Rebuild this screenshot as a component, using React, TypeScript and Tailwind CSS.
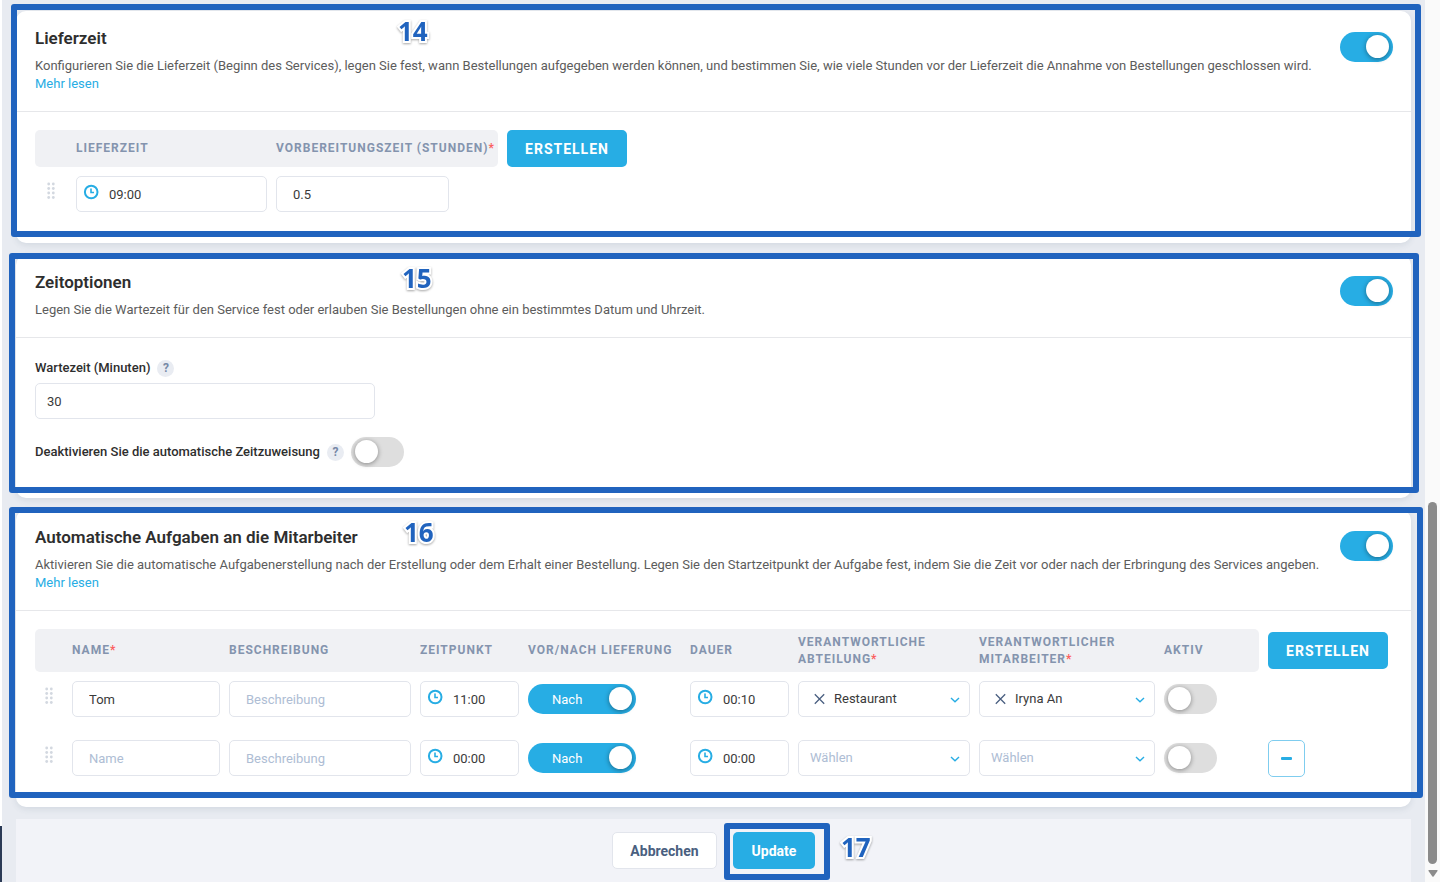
import React from "react";
import clsx from "clsx";

const INPUT =
  "block h-9 rounded-[5px] border border-[#e2e5ec] bg-white text-[13px] text-[#3a3a3a] placeholder:text-[#aebdd4] focus:outline-none";
const TH = "text-left text-xs leading-[17px] font-bold tracking-[1px] text-[#8494ae] uppercase";

const Toggle = (props: { label: string; on?: boolean }) => (
  <input
    type="checkbox"
    role="switch"
    aria-label={props.label}
    defaultChecked={props.on}
    className="relative block h-[30px] w-[53px] flex-shrink-0 appearance-none rounded-full bg-[#dedede] before:absolute before:top-[3px] before:left-1 before:size-[23px] before:rounded-full before:bg-white before:shadow-[0_1px_5px_rgba(0,0,0,0.4)] checked:bg-[#27ade4] checked:before:left-[26px]"
  />
);

const OrderToggle = (props: { label: string }) => (
  <label className="relative block h-[30px] w-[108px]">
    <input
      type="checkbox"
      role="switch"
      aria-label={props.label}
      defaultChecked
      className="relative block h-[30px] w-[108px] appearance-none rounded-full bg-[#27ade4] before:absolute before:top-[3px] before:right-1 before:size-[23px] before:rounded-full before:bg-white before:shadow-[0_1px_5px_rgba(0,0,0,0.4)]"
    />
    <span className="absolute top-[7px] left-6 text-[13px] leading-[18px] text-white">
      Nach
    </span>
  </label>
);

const Grip = () => (
  <svg width="8" height="18" viewBox="0 0 8 18" fill="#d3d8e0" aria-hidden="true">
    {[2, 6.5, 11, 15.5].map((y) => (
      <g key={y}>
        <circle cx="1.7" cy={y} r="1.4" />
        <circle cx="6.3" cy={y} r="1.4" />
      </g>
    ))}
  </svg>
);

const TimeInput = (props: { label: string; value: string; className: string }) => (
  <div className="relative">
    <svg
      className="absolute top-2 left-[7px] size-4"
      viewBox="0 0 16 16"
      fill="none"
      stroke="#27ade4"
      strokeWidth="2"
      aria-hidden="true"
    >
      <circle cx="8.2" cy="8" r="6.3" />
      <path d="M8 4.6V8.5H11" strokeWidth="1.6" />
    </svg>
    <input
      type="text"
      aria-label={props.label}
      defaultValue={props.value}
      className={clsx(INPUT, "pl-8", props.className)}
    />
  </div>
);

const SelectField = (props: { label: string; value?: string; className: string }) => (
  <div className={clsx("relative", props.className)}>
    <select
      aria-label={props.label}
      className={clsx(
        INPUT,
        "w-full appearance-none",
        props.value ? "pl-[35px]" : "pl-[11px] text-[#aebdd4]"
      )}
    >
      <option>{props.value || "Wählen"}</option>
    </select>
    {props.value && (
      <button
        type="button"
        aria-label="Auswahl entfernen"
        className="absolute top-3 left-4"
      >
        <svg width="11" height="12" viewBox="0 0 11 12" stroke="#4a5f80" strokeWidth="1.3">
          <path d="M.8 1.3l9.4 9.4M10.2 1.3L.8 10.7" />
        </svg>
      </button>
    )}
    <svg
      className="pointer-events-none absolute top-4 right-[10px]"
      width="10"
      height="6"
      viewBox="0 0 10 6"
      fill="none"
      stroke="#27ade4"
      strokeWidth="1.4"
      aria-hidden="true"
    >
      <path d="M1 .9l4 3.8L9 .9" />
    </svg>
  </div>
);

const CreateButton = () => (
  <button
    type="button"
    className="block h-[37px] w-[120px] rounded-[5px] bg-[#27ade4] text-sm font-bold tracking-[1px] text-white"
  >
    ERSTELLEN
  </button>
);

const Help = () => (
  <button
    type="button"
    aria-label="Hilfe"
    className="size-[17px] rounded-full bg-[#e9ecf2] text-xs leading-[17px] font-bold text-[#7688a6]"
  >
    ?
  </button>
);

const Required = () => <span className="text-[#fb5f5f]">*</span>;

// step outline and number drawn on top of a section
const Step = (props: { n: number; frame: string; number: string }) => (
  <>
    <div
      className={clsx(
        "pointer-events-none absolute rounded-[3px] border-[6px] border-[#2063be]",
        props.frame
      )}
    />
    <span
      className={clsx(
        "pointer-events-none absolute font-['Noto_Sans'] text-[26px] leading-[30px] font-bold text-[#2063be] drop-shadow-[0_1px_1px_rgba(0,0,0,0.35)] [-webkit-text-stroke:4px_white] [paint-order:stroke_fill]",
        props.number
      )}
    >
      {props.n}
    </span>
  </>
);

const Section = (props: {
  title: string;
  text: string;
  more?: boolean;
  step: React.ReactNode;
  children: React.ReactNode;
}) => (
  <section className="relative rounded-[10px] bg-white shadow-[0_2px_6px_rgba(60,80,110,0.12)]">
    <header className="flex items-start justify-between border-b border-[#e6e7ea] px-[18px] pt-[17px] pb-[18px]">
      <div className="pl-px">
        <h2 className="text-[17px] leading-5 font-semibold text-[#2e2e2e]">{props.title}</h2>
        <p className="mt-[9px] text-[13px] leading-[18px] text-[#5c5c5c]">{props.text}</p>
        {props.more && (
          <a href="#" className="block w-fit text-[13px] leading-[18px] text-[#27ade4]">
            Mehr lesen
          </a>
        )}
      </div>
      <div className="pt-1">
        <Toggle label={props.title} on />
      </div>
    </header>
    {props.children}
    {props.step}
  </section>
);

const tasks = [
  { name: "Tom", time: "11:00", duration: "00:10", department: "Restaurant", employee: "Iryna An" },
  { name: "", time: "00:00", duration: "00:00", removable: true },
];

export default function App() {
  return (
    <div className="flex min-h-screen bg-[#e8ebf1] font-[Roboto,sans-serif]">
      <div className="flex w-[2px] flex-col bg-white">
        <div className="mt-auto h-14 bg-[#2b3a55]" />
      </div>

      <main className="flex min-w-0 flex-1 flex-col gap-3 px-[14px] pt-[11px]">
        <Section
          title="Lieferzeit"
          text="Konfigurieren Sie die Lieferzeit (Beginn des Services), legen Sie fest, wann Bestellungen aufgegeben werden können, und bestimmen Sie, wie viele Stunden vor der Lieferzeit die Annahme von Bestellungen geschlossen wird."
          more
          step={
            <Step
              n={14}
              frame="-top-[7px] bottom-[6px] -left-[5px] -right-[10px]"
              number="top-[5px] left-[382px]"
            />
          }
        >
          <div className="px-[19px] pt-[18px] pb-[17px]">
            <table className="w-full table-fixed border-separate border-spacing-0">
              <colgroup>
                <col className="w-[41px]" />
                <col className="w-[200px]" />
                <col className="w-[222px]" />
                <col />
              </colgroup>
              <thead>
                <tr>
                  <td className="rounded-l-[5px] bg-[#f0f1f4]" />
                  <th className={clsx(TH, "bg-[#f0f1f4]")}>Lieferzeit</th>
                  <th className={clsx(TH, "rounded-r-[5px] bg-[#f0f1f4] whitespace-nowrap")}>
                    Vorbereitungszeit (Stunden)
                    <Required />
                  </th>
                  <td className="pl-[9px]">
                    <CreateButton />
                  </td>
                </tr>
              </thead>
              <tbody>
                <tr className="h-[59px] align-top">
                  <td className="pt-[15px] pl-3">
                    <Grip />
                  </td>
                  <td className="pt-[9px]">
                    <TimeInput label="Lieferzeit" value="09:00" className="w-[191px]" />
                  </td>
                  <td className="pt-[9px]">
                    <input
                      type="text"
                      aria-label="Vorbereitungszeit (Stunden)"
                      defaultValue="0.5"
                      className={clsx(INPUT, "w-[173px] pl-4")}
                    />
                  </td>
                  <td />
                </tr>
              </tbody>
            </table>
          </div>
        </Section>

        <Section
          title="Zeitoptionen"
          text="Legen Sie die Wartezeit für den Service fest oder erlauben Sie Bestellungen ohne ein bestimmtes Datum und Uhrzeit."
          step={
            <Step
              n={15}
              frame="-top-[2px] bottom-[5px] -left-[7px] -right-[8px]"
              number="top-2 left-[386px]"
            />
          }
        >
          <div className="px-[19px] pt-[21px] pb-[31px] text-[13px] leading-[18px] font-medium text-[#2e2e2e]">
            <div className="flex items-center gap-[7px]">
              <label htmlFor="wait">Wartezeit (Minuten)</label>
              <Help />
            </div>
            <input
              id="wait"
              type="text"
              defaultValue="30"
              className={clsx(INPUT, "mt-[6px] w-[340px] pl-[11px] font-normal")}
            />
            <div className="mt-[18px] flex items-center gap-[7px]">
              <span>Deaktivieren Sie die automatische Zeitzuweisung</span>
              <Help />
              <Toggle label="Deaktivieren Sie die automatische Zeitzuweisung" />
            </div>
          </div>
        </Section>

        <Section
          title="Automatische Aufgaben an die Mitarbeiter"
          text="Aktivieren Sie die automatische Aufgabenerstellung nach der Erstellung oder dem Erhalt einer Bestellung. Legen Sie den Startzeitpunkt der Aufgabe fest, indem Sie die Zeit vor oder nach der Erbringung des Services angeben."
          more
          step={
            <Step
              n={16}
              frame="-top-[3px] bottom-[9px] -left-[7px] -right-[12px]"
              number="top-[7px] left-[388px]"
            />
          }
        >
          <div className="px-[19px] pt-[18px] pb-[17px]">
            <table className="w-full table-fixed border-separate border-spacing-0">
              <colgroup>
                <col className="w-[37px]" />
                <col className="w-[157px]" />
                <col className="w-[191px]" />
                <col className="w-[108px]" />
                <col className="w-[162px]" />
                <col className="w-[108px]" />
                <col className="w-[181px]" />
                <col className="w-[185px]" />
                <col className="w-[95px]" />
                <col />
              </colgroup>
              <thead>
                <tr className="h-[43px]">
                  <td className="rounded-l-[5px] bg-[#f0f1f4]" />
                  <th className={clsx(TH, "bg-[#f0f1f4]")}>
                    Name
                    <Required />
                  </th>
                  <th className={clsx(TH, "bg-[#f0f1f4]")}>Beschreibung</th>
                  <th className={clsx(TH, "bg-[#f0f1f4]")}>Zeitpunkt</th>
                  <th className={clsx(TH, "bg-[#f0f1f4] whitespace-nowrap")}>Vor/Nach Lieferung</th>
                  <th className={clsx(TH, "bg-[#f0f1f4]")}>Dauer</th>
                  <th className={clsx(TH, "bg-[#f0f1f4]")}>
                    Verantwortliche
                    <br />
                    Abteilung
                    <Required />
                  </th>
                  <th className={clsx(TH, "bg-[#f0f1f4]")}>
                    Verantwortlicher
                    <br />
                    Mitarbeiter
                    <Required />
                  </th>
                  <th className={clsx(TH, "rounded-r-[5px] bg-[#f0f1f4]")}>Aktiv</th>
                  <td className="pl-[9px]">
                    <CreateButton />
                  </td>
                </tr>
              </thead>
              <tbody>
                {tasks.map((task, i) => (
                  <tr key={i} className="h-[59px] align-top">
                    <td className="pt-[15px] pl-[10px]">
                      <Grip />
                    </td>
                    <td className="pt-[9px]">
                      <input
                        type="text"
                        aria-label="Name"
                        placeholder="Name"
                        defaultValue={task.name}
                        className={clsx(INPUT, "w-[148px] pl-4")}
                      />
                    </td>
                    <td className="pt-[9px]">
                      <input
                        type="text"
                        aria-label="Beschreibung"
                        placeholder="Beschreibung"
                        className={clsx(INPUT, "w-[182px] pl-4")}
                      />
                    </td>
                    <td className="pt-[9px]">
                      <TimeInput label="Zeitpunkt" value={task.time} className="w-[99px]" />
                    </td>
                    <td className="pt-3">
                      <OrderToggle label="Vor/Nach Lieferung" />
                    </td>
                    <td className="pt-[9px]">
                      <TimeInput label="Dauer" value={task.duration} className="w-[99px]" />
                    </td>
                    <td className="pt-[9px]">
                      <SelectField
                        label="Verantwortliche Abteilung"
                        value={task.department}
                        className="w-[172px]"
                      />
                    </td>
                    <td className="pt-[9px]">
                      <SelectField
                        label="Verantwortlicher Mitarbeiter"
                        value={task.employee}
                        className="w-[176px]"
                      />
                    </td>
                    <td className="pt-3">
                      <Toggle label="Aktiv" />
                    </td>
                    <td className="pt-[9px] pl-[9px]">
                      {task.removable && (
                        <button
                          type="button"
                          aria-label="Zeile entfernen"
                          className="flex size-[37px] items-center justify-center rounded-[5px] border border-[#7fcdef] bg-white"
                        >
                          <span className="h-[3px] w-[11px] rounded-[1px] bg-[#27ade4]" />
                        </button>
                      )}
                    </td>
                  </tr>
                ))}
              </tbody>
            </table>
          </div>
        </Section>

        <footer className="flex flex-1 items-start justify-center gap-4 bg-[#f2f3f8] py-[13px] text-sm font-bold">
          <button
            type="button"
            className="h-[37px] w-[105px] rounded-[5px] border border-[#e2e5ec] bg-white text-[#4a5f80]"
          >
            Abbrechen
          </button>
          <div className="relative">
            <button type="button" className="h-[37px] w-[82px] rounded-[5px] bg-[#27ade4] text-white">
              Update
            </button>
            <Step
              n={17}
              frame="-top-[9px] -bottom-[11px] -left-[9px] -right-[15px]"
              number="top-0 left-[108px]"
            />
          </div>
        </footer>
      </main>

      <aside className="sticky top-0 flex h-screen w-[15px] flex-col items-center bg-[#fafafa]">
        <div className="mt-auto h-[41%] w-[9px] rounded-full bg-[#8b8b8b]" />
        <svg className="mt-[6px] mb-[5px]" width="10" height="7" viewBox="0 0 10 7" fill="#8b8b8b">
          <path d="M1 0h8q1 0 .5 1L5.6 6.4q-.6.8-1.2 0L.5 1Q0 0 1 0z" />
        </svg>
      </aside>
    </div>
  );
}
